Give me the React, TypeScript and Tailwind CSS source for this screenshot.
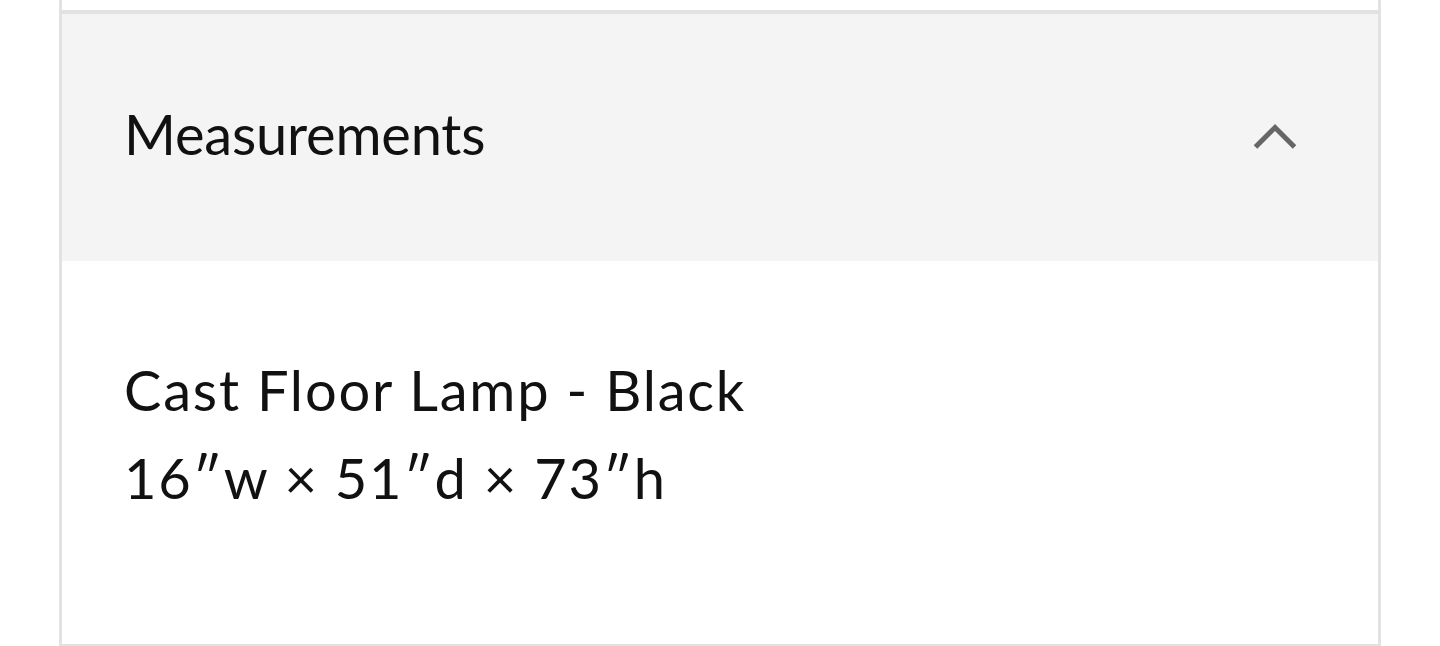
export default function App() {
  return (
    <div className="min-h-screen bg-white font-['Lato','Noto_Sans',sans-serif] text-[#111]">
      <div className="mx-[59px] border-x-[3px] border-[#e2e2e2]">
        <div className="h-[10px]" />
        <section className="border-y-[4px] border-[#e2e2e2]">
          <button className="flex h-[247px] w-full items-center justify-between bg-[#f4f4f4] pl-[62px] pr-[81px] text-left">
            <span className="mb-[8px] text-[56px] leading-none tracking-[-0.2px]">Measurements</span>
            <svg width="44" height="27" viewBox="0 0 44 27" fill="none" className="mb-[2px]">
              <polyline
                points="2.5,24 22,4.5 41.5,24"
                stroke="#666666"
                strokeWidth="5"
                strokeLinecap="butt"
                strokeLinejoin="miter"
              />
            </svg>
          </button>
          <div className="pl-[62px] pt-[85px] pb-[122px] text-[56px] leading-[88px] tracking-[1.8px]">
            <p>Cast Floor Lamp - Black</p>
            <p>16″w × 51″d × 73″h</p>
          </div>
        </section>
      </div>
    </div>
  );
}
